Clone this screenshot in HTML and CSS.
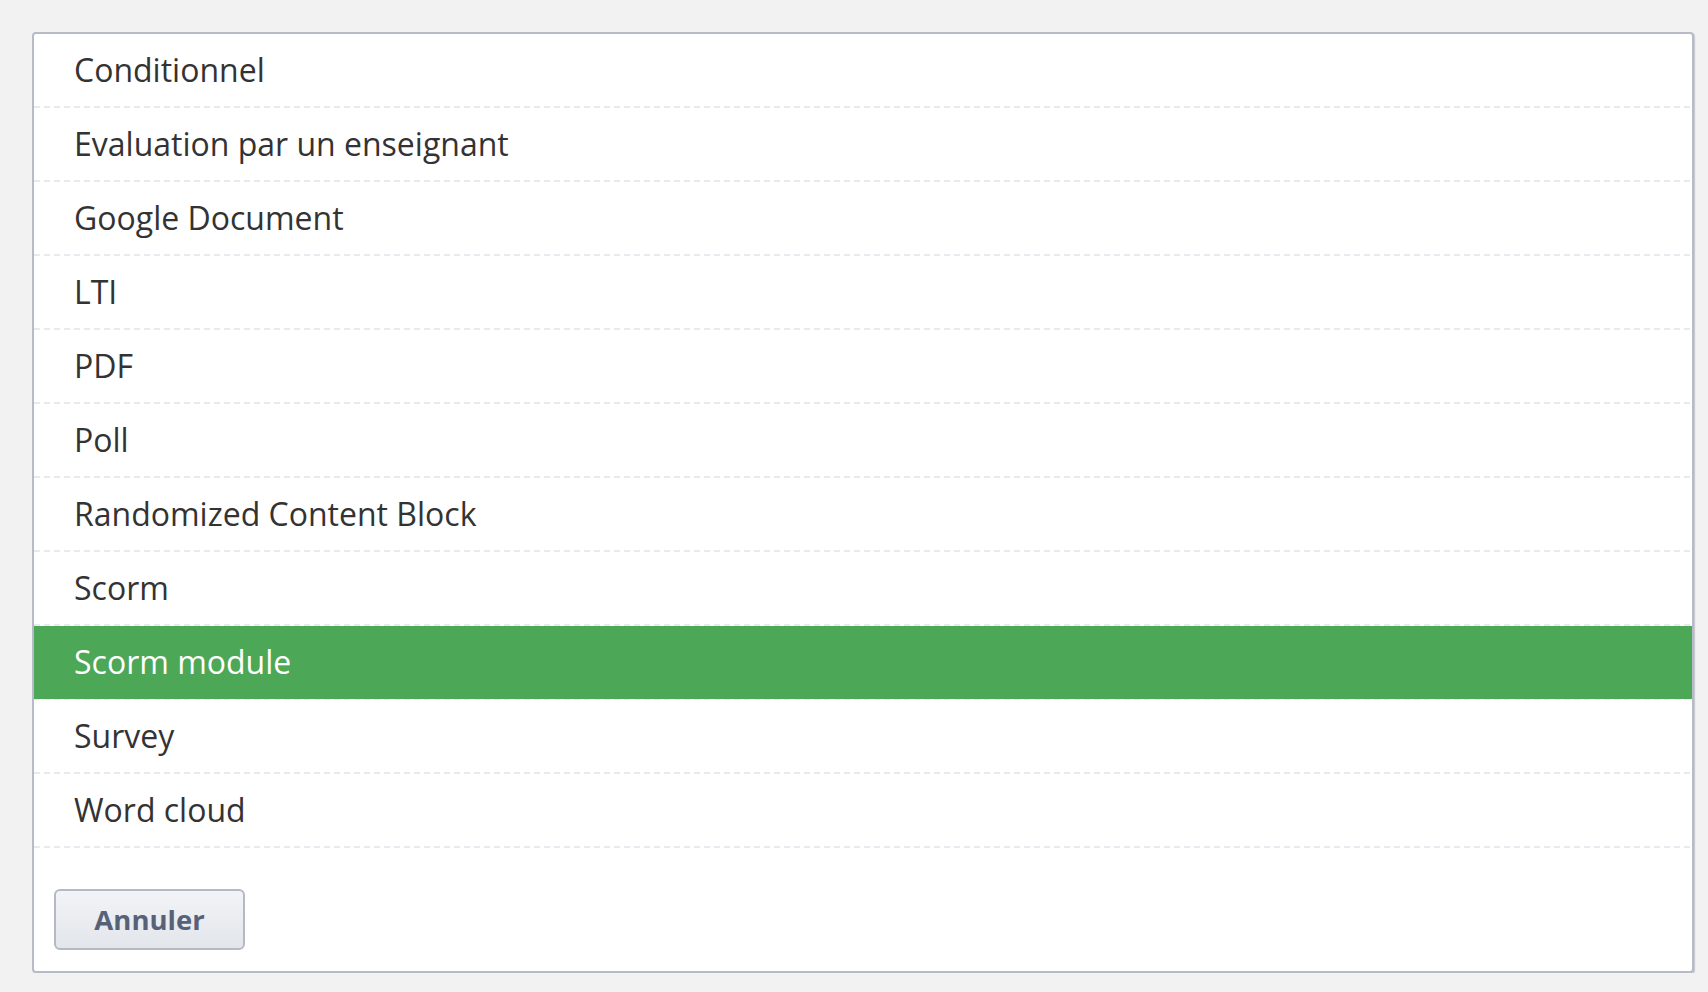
FILE: index.html
```html
<!DOCTYPE html>
<html lang="fr">
<head>
<meta charset="utf-8">
<title>Types</title>
<link rel="stylesheet" href="styles.css">
</head>
<body>
<div class="panel">
  <ul class="list">
    <li class="item">Conditionnel</li>
    <li class="item">Evaluation par un enseignant</li>
    <li class="item">Google Document</li>
    <li class="item">LTI</li>
    <li class="item">PDF</li>
    <li class="item">Poll</li>
    <li class="item">Randomized Content Block</li>
    <li class="item">Scorm</li>
    <li class="item item-active">Scorm module</li>
    <li class="item">Survey</li>
    <li class="item">Word cloud</li>
  </ul>
  <div class="footer">
    <button class="btn" type="button">Annuler</button>
  </div>
</div>
</body>
</html>
```
FILE: styles.css
```css
html, body {
  margin: 0;
  padding: 0;
  background: #f2f2f2;
  font-family: "Open Sans", "Liberation Sans", sans-serif;
}

.panel {
  margin: 32px 14px 0 32px;
  background: #fff;
  border: 2px solid #b6bbc7;
  border-radius: 4px;
  box-shadow: 1px 1px 1px rgba(150, 156, 172, 0.5);
}

.list {
  list-style: none;
  margin: 0;
  padding: 0;
}

.item {
  height: 72px;
  line-height: 72px;
  padding: 0 0 2px 40px;
  font-size: 32px;
  color: #333333;
  background-image: repeating-linear-gradient(to right, #e7eaef 0 6px, transparent 6px 10px);
  background-size: 100% 2px;
  background-position: left bottom;
  background-repeat: no-repeat;
}

.item-active {
  color: #ffffff;
  background-image:
    linear-gradient(#4ca756, #4ca756),
    repeating-linear-gradient(to right, #e7eaef 0 6px, transparent 6px 10px);
  background-size: 100% 73px, 100% 2px;
  background-position: left top, left bottom;
  background-repeat: no-repeat, no-repeat;
}

.footer {
  padding: 41px 20px 21px 20px;
}

.btn {
  display: block;
  width: 191px;
  height: 61px;
  margin: 0;
  padding: 0;
  border: 2px solid #b4b9c5;
  border-radius: 6px;
  background: linear-gradient(to bottom, #f2f4f7, #e2e5ea);
  font-family: "Open Sans", "Liberation Sans", sans-serif;
  font-size: 27.5px;
  font-weight: 700;
  color: #576279;
}
```
